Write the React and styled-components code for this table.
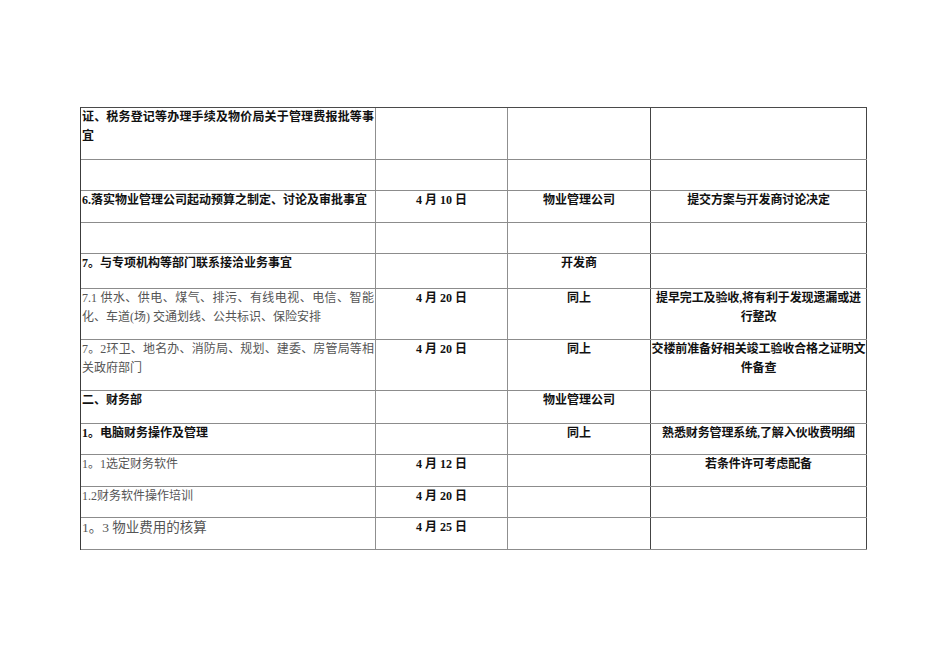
import React from "react";
import styled, { createGlobalStyle } from "styled-components";

const GlobalStyle = createGlobalStyle`
  html, body { margin: 0; padding: 0; background: #ffffff; }
  body { font-family: "Liberation Serif", "Noto Sans CJK SC", serif; }
`;

const Page = styled.div`
  width: 950px;
  height: 672px;
  box-sizing: border-box;
  padding: 107px 0 0 80px;
  overflow: hidden;
  background: #fff;
`;

const Table = styled.div`
  width: 787px;
  box-sizing: border-box;
  border-top: 1px solid #4a4a4a;
  border-left: 1px solid #3c3c3c;
`;

const Row = styled.div`
  display: grid;
  grid-template-columns: 295px 132px 143px 216px;
  height: ${(p) => p.$h}px;
  box-sizing: border-box;
  border-bottom: 1px solid #8c8c8c;
`;

const Cell = styled.div`
  box-sizing: border-box;
  border-right: 1px solid ${(p) => (p.$dark ? "#444" : "#8f8f8f")};
  padding: 0 ${(p) => (p.$center ? 0 : 1)}px;
  font-family: "Liberation Serif", "Noto Sans CJK SC", serif;
  font-size: ${(p) => (p.$large ? 13.5 : 12)}px;
  line-height: 19px;
  font-weight: ${(p) => (p.$gray ? 400 : 700)};
  color: ${(p) => (p.$gray ? "#555" : "#111")};
  text-align: ${(p) => (p.$center ? "center" : p.$justify ? "justify" : "left")};
  letter-spacing: ${(p) => (p.$tight ? "-0.12px" : "0")};
  overflow: hidden;
`;

const rows = [
  { h: 52, c: [{ t: "证、税务登记等办理手续及物价局关于管理费报批等事宜", justify: true }, null, null, null] },
  { h: 31, c: [null, null, null, null] },
  {
    h: 32,
    c: [
      { t: "6.落实物业管理公司起动预算之制定、讨论及审批事宜" },
      { t: "4 月 10 日" },
      { t: "物业管理公司" },
      { t: "提交方案与开发商讨论决定" },
    ],
  },
  { h: 31, c: [null, null, null, null] },
  { h: 35, c: [{ t: "7。与专项机构等部门联系接洽业务事宜" }, null, { t: "开发商" }, null] },
  {
    h: 51,
    c: [
      { t: "7.1 供水、供电、煤气、排污、有线电视、电信、智能化、车道(场) 交通划线、公共标识、保险安排", gray: true, justify: true },
      { t: "4 月 20 日" },
      { t: "同上" },
      { t: "提早完工及验收,将有利于发现遗漏或进行整改" },
    ],
  },
  {
    h: 51,
    c: [
      { t: "7。2环卫、地名办、消防局、规划、建委、房管局等相关政府部门", gray: true, justify: true },
      { t: "4 月 20 日" },
      { t: "同上" },
      { t: "交楼前准备好相关竣工验收合格之证明文件备查" },
    ],
  },
  { h: 33, c: [{ t: "二、财务部" }, null, { t: "物业管理公司" }, null] },
  {
    h: 31,
    c: [{ t: "1。电脑财务操作及管理" }, null, { t: "同上" }, { t: "熟悉财务管理系统,了解入伙收费明细" }],
  },
  { h: 32, c: [{ t: "1。1选定财务软件", gray: true }, { t: "4 月 12 日" }, null, { t: "若条件许可考虑配备" }] },
  { h: 31, c: [{ t: "1.2财务软件操作培训", gray: true }, { t: "4 月 20 日" }, null, null] },
  { h: 32, c: [{ t: "1。3 物业费用的核算", gray: true, large: true }, { t: "4 月 25 日" }, null, null] },
];

export default function App() {
  return (
    <>
      <GlobalStyle />
      <Page>
        <Table>
          {rows.map((r, i) => (
            <Row key={i} $h={r.h}>
              {r.c.map((c, j) => (
                <Cell
                  key={j}
                  $center={j > 0}
                  $dark={j >= 2}
                  $gray={c && c.gray}
                  $justify={c && c.justify}
                  $large={c && c.large}
                  $tight={j === 3}
                >
                  {c ? c.t : ""}
                </Cell>
              ))}
            </Row>
          ))}
        </Table>
      </Page>
    </>
  );
}
